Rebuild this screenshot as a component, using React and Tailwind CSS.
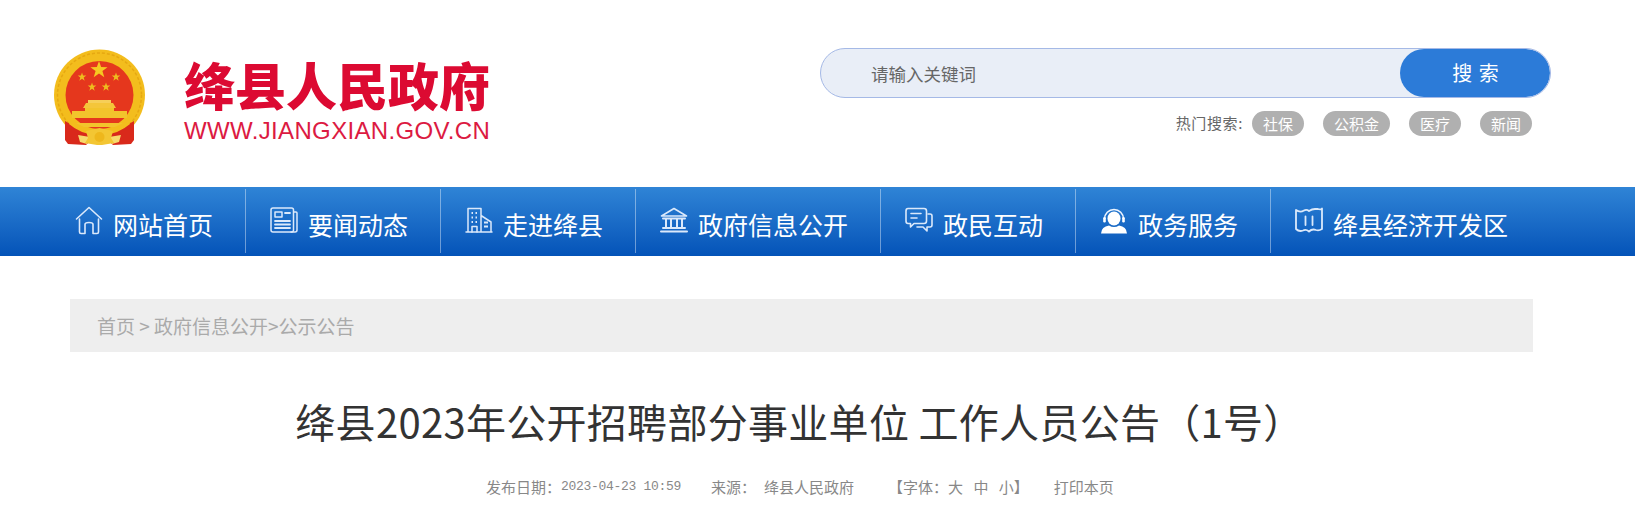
const cjk = "font-['Noto_Sans_CJK_SC','Liberation_Sans',sans-serif]";

function star(cx, cy, r) {
  const pts = [];
  for (let i = 0; i < 10; i++) {
    const a = -Math.PI / 2 + (i * Math.PI) / 5;
    const rad = i % 2 === 0 ? r : r * 0.4;
    pts.push(`${(cx + rad * Math.cos(a)).toFixed(2)},${(cy + rad * Math.sin(a)).toFixed(2)}`);
  }
  return pts.join(" ");
}

function Emblem() {
  return (
    <svg width="100" height="110" viewBox="0 0 100 110" className="block">
      <circle cx="49.5" cy="55" r="45.5" fill="#f3bd1d" />
      <circle cx="49.5" cy="55" r="42" fill="none" stroke="#e6a812" strokeWidth="1.5" strokeDasharray="3 2" />
      <circle cx="49.5" cy="55" r="34" fill="#e5371d" />
      <polygon points={star(49, 30, 9)} fill="#f6c821" />
      <polygon points={star(32, 37, 4.5)} fill="#eebc1f" />
      <polygon points={star(66, 37, 4.5)} fill="#eebc1f" />
      <polygon points={star(42, 47, 4.5)} fill="#eebc1f" />
      <polygon points={star(56, 47, 4.5)} fill="#eebc1f" />
      <rect x="38" y="60" width="23" height="3" fill="#f6cf58" />
      <path d="M36 63 L63 63 L66 68 L33 68 Z" fill="#f4c63a" />
      <rect x="35" y="68" width="29" height="3" fill="#f2c42c" />
      <rect x="22" y="71" width="55" height="7" fill="#f2c42c" />
      <rect x="19" y="83" width="61" height="4" fill="#f2c42c" />
      <path d="M15 81 Q24 87 35 88 L41 100 L36 105 L18 104 L15 100 Z" fill="#d9291b" />
      <path d="M84 81 Q75 87 64 88 L58 100 L63 105 L81 104 L84 100 Z" fill="#d9291b" />
      <path d="M22 80 Q34 90 49.5 89 Q65 90 77 80 L80 84 Q66 96 49.5 94 Q33 96 19 84 Z" fill="#f3bd1d" />
      <path d="M28 95 L40 97 L37 104 L30 102 Z" fill="#f7da6d" />
      <path d="M71 95 L59 97 L62 104 L69 102 Z" fill="#f7da6d" />
      <path d="M36 91 L49.5 88 L63 91 L61 98 L64 103 L52 105 H47 L35 103 L38 98 Z" fill="#f3c633" />
      <circle cx="49.5" cy="97" r="5" fill="#eeb71c" />
    </svg>
  );
}

const common = { fill: "none", stroke: "#dbe9fb", strokeWidth: 1.6, strokeLinejoin: "round", strokeLinecap: "round" };

const icons = [
  <svg key="h" width="28" height="29" viewBox="0 0 28 29" {...common}>
    <path d="M1.5 13 L14 1.5 L26.5 13" />
    <path d="M4.5 13 V26 Q4.5 27.5 6 27.5 H10 V18.5 Q10 16.5 14 16.5 Q18 16.5 18 18.5 V27.5 H22 Q23.5 27.5 23.5 26 V13" />
  </svg>,
  <svg key="n" width="28" height="26" viewBox="0 0 28 26" {...common} strokeWidth="1.5">
    <rect x="1" y="1" width="22.5" height="24" rx="2" />
    <path d="M24 5 H26 Q27 5 27 6 V23 Q27 25 25 25 H21" />
    <rect x="5" y="5" width="7" height="5" />
    <path d="M15 6 H20 M5 14 H20 M5 17.5 H20 M5 21 H20" strokeWidth="1.8" />
  </svg>,
  <svg key="b" width="28" height="26" viewBox="0 0 28 26" {...common} strokeWidth="1.5">
    <path d="M1 25 H27 M3 25 V1.5 H16 V25 M16 8.5 L26 15 V25" />
    <path d="M6.5 6 H8 M10.5 6 H12 M6.5 10.5 H8 M10.5 10.5 H12 M6.5 15 H8 M10.5 15 H12 M19 15.5 H23 M19 19.5 H23" strokeWidth="2" strokeLinecap="butt" />
    <path d="M7 25 V19.5 H12 V25" />
  </svg>,
  <svg key="l" width="28" height="26" viewBox="0 0 28 26" {...common} strokeWidth="1.6">
    <path d="M1.5 9 L14 1.5 L26.5 9 Z" />
    <path d="M3 11.5 H25 M6 12 V20.5 M11 12 V20.5 M17 12 V20.5 M22 12 V20.5" strokeWidth="2" />
    <path d="M3 21 H25 M1 24.5 H27" strokeWidth="2" />
  </svg>,
  <svg key="c" width="28" height="26" viewBox="0 0 28 26" {...common}>
    <path d="M3 1.5 H19 Q21.5 1.5 21.5 4 V14 Q21.5 16.5 19 16.5 H9 L5.5 20 V16.5 H3 Q1 16.5 1 14 V4 Q1 1.5 3 1.5 Z" />
    <path d="M6 6.5 H16 M6 11 H12" />
    <path d="M23 7 H25 Q27 7 27 9 V18 Q27 20 25 20 H22 V24 L18 20 H12" />
  </svg>,
  <svg key="p" width="28" height="27" viewBox="0 0 28 27">
    <path d="M4.5 12 A9.5 9.5 0 0 1 23.5 12" fill="none" stroke="#eef5ff" strokeWidth="1.6" />
    <rect x="3.2" y="10" width="2.6" height="5.5" rx="1.2" fill="#fff" />
    <rect x="22.2" y="10" width="2.6" height="5.5" rx="1.2" fill="#fff" />
    <ellipse cx="14" cy="11.5" rx="6.5" ry="7" fill="#fff" />
    <path d="M1 26.5 Q1.5 19.5 9 18.5 Q14 21.5 19 18.5 Q26.5 19.5 27 26.5 Z" fill="#fff" />
  </svg>,
  <svg key="m" width="28" height="27" viewBox="0 0 28 27" {...common} strokeWidth="1.8">
    <path d="M1 3 Q5 6 9 3.5 Q11.5 2 14 4 Q17 2 20 2 L23 2 Q26 3 27 1.5 V22 Q24 24 21 23 Q17 21.5 14 24.5 Q11 22 8 23.5 Q4 25 1 22 Z" />
    <path d="M10.5 9.5 V18 M17.5 9.5 V18" />
  </svg>,
];

const navItems = ["网站首页", "要闻动态", "走进绛县", "政府信息公开", "政民互动", "政务服务", "绛县经济开发区"];

export default function App() {
  return (
    <div className={`w-full h-[522px] overflow-hidden bg-white ${cjk}`}>
      <header className="h-[187px] flex justify-between pl-[50px] pr-[84px]">
        <div className="flex items-start">
          <div className="mt-[40px]"><Emblem /></div>
          <div className="ml-[34px] mt-[54px] flex flex-col text-[#dc0a32]">
            <span className="text-[51px] leading-[60px] font-black whitespace-nowrap">绛县人民政府</span>
            <span className="font-['Liberation_Sans',sans-serif] text-[24px] leading-[28px] mt-[3px] tracking-[0.35px] whitespace-nowrap text-[#dc1a42]">WWW.JIANGXIAN.GOV.CN</span>
          </div>
        </div>
        <div className="w-[731px] mt-[48px] flex flex-col">
          <div className="h-[50px] rounded-full border border-[#a5b9e6] bg-[#e9eef7] flex items-center justify-between overflow-hidden">
            <span className="pl-[50px] pt-[3px] text-[17.5px] text-[#666]">请输入关键词</span>
            <button className="w-[150px] h-[48px] pl-[2px] rounded-full bg-[#2c7bd8] text-white text-[20px] tracking-[1px]">搜 索</button>
          </div>
          <div className="flex justify-end items-center gap-[19px] pr-[19px] mt-[13px] text-[15px]">
            <span className="text-[#666] -mr-[10px] tracking-[0.6px] whitespace-nowrap">热门搜索:</span>
            {["社保", "公积金", "医疗", "新闻"].map((t) => (
              <span key={t} className="h-[25px] leading-[25px] px-[11px] rounded-full bg-[#b0b0b0] text-white">{t}</span>
            ))}
          </div>
        </div>
      </header>

      <nav className="h-[69px] flex pl-[51px] bg-linear-to-b from-[#2f84d6] to-[#0453b8]">
        {navItems.map((t, i) => (
          <div key={t} className={`my-[2px] h-[64px] flex items-center pl-[24px] pr-[32px] ${i < 6 ? "border-r border-white/40" : ""}`}>
            <span className="w-[28px] -mt-[2px] flex justify-center">{icons[i]}</span>
            <span className="ml-[10px] pt-[6px] text-[25px] leading-[36px] text-white whitespace-nowrap">{t}</span>
          </div>
        ))}
      </nav>

      <div className="mt-[43px] mx-[70px] w-[1463px] h-[53px] pt-[1px] bg-[#eeeeee] flex items-center pl-[27px] text-[19px] text-[#aaa]">
        首页 &gt; 政府信息公开&gt;公示公告
      </div>

      <h1 className="mt-[37px] pr-[36px] text-center text-[40px] leading-[64px] tracking-[0.3px] text-[#333] whitespace-nowrap">
        绛县2023年公开招聘部分事业单位 工作人员公告（1号）
      </h1>

      <div className="mt-[24px] pl-[486px] flex items-center text-[15px] leading-[20px] text-[#888] whitespace-nowrap">
        <span>发布日期：</span>
        <span className="font-['Liberation_Mono',monospace] text-[13px] tracking-[-0.3px]">2023-04-23 10:59</span>
        <span className="ml-[30px]">来源：</span>
        <span className="ml-[8px]">绛县人民政府</span>
        <span className="ml-[34px] [word-spacing:7px]">【字体：大 中 小】</span>
        <span className="ml-[25px]">打印本页</span>
      </div>
    </div>
  );
}
